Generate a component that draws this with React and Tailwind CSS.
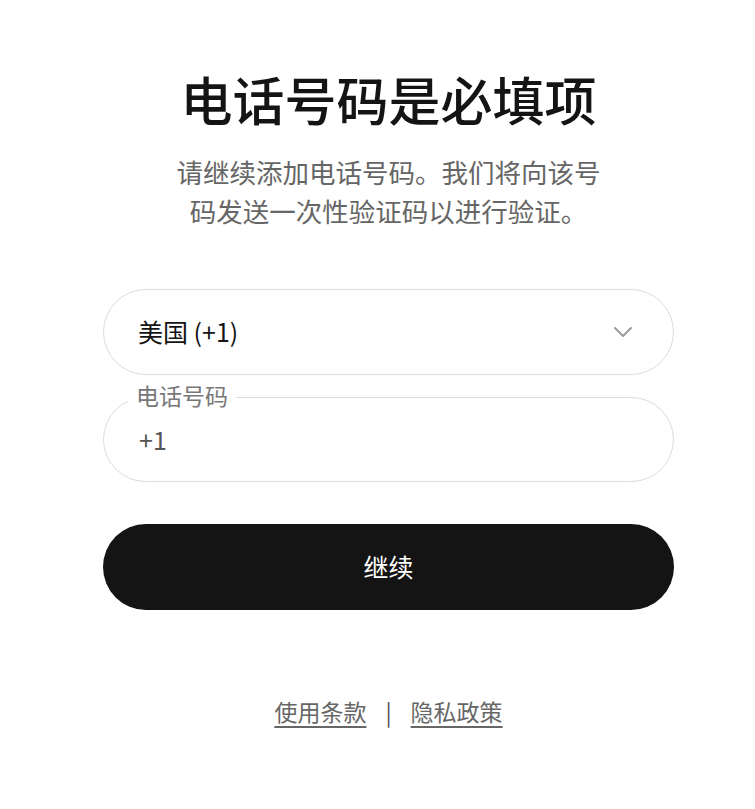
export default function App() {
  return (
    <div
      className="min-h-[809px] w-full bg-white pl-[103px] pr-[81px]"
      style={{ fontFamily: '"Noto Sans CJK SC", "Noto Sans", sans-serif' }}
    >
      <div className="flex w-[571px] flex-col items-center pt-[68px]">
        {/* Heading */}
        <h1 className="text-[52px] font-medium leading-[62px] text-[#141414]">电话号码是必填项</h1>
        <p className="mt-[22px] text-center text-[26.5px] leading-[39px] text-[#666666]">
          请继续添加电话号码。我们将向该号
          <br />
          码发送一次性验证码以进行验证。
        </p>

        {/* Country select */}
        <div className="mt-[59px] flex h-[86px] w-full items-center justify-between rounded-full border border-[#dcdcdc] pl-[34px] pr-[40px]">
          <span className="text-[25px] text-[#141414]">美国 (+1)</span>
          <svg width="20" height="12" viewBox="0 0 20 12" fill="none">
            <path d="M2 2l8 8 8-8" stroke="#9a9a9a" strokeWidth="2" strokeLinecap="round" strokeLinejoin="round" />
          </svg>
        </div>

        {/* Phone number field */}
        <div className="relative mt-[22px] flex h-[85px] w-full items-center rounded-full border border-[#dcdcdc] pl-[35px]">
          <span className="absolute -top-[18px] left-[24px] bg-white px-[8px] text-[23px] leading-[30px] text-[#777777]">
            电话号码
          </span>
          <span className="text-[25px] text-[#555555]">+1</span>
        </div>

        {/* Continue button */}
        <button className="mt-[42px] flex h-[86px] w-full items-center justify-center rounded-full bg-[#141414] text-[25px] text-white">
          继续
        </button>

        {/* Footer links */}
        <div className="mt-[86px] flex items-center gap-[19px] text-[23px] leading-[30px] text-[#666666]">
          <a className="underline underline-offset-[5px]">使用条款</a>
          <span className="text-[#555555]">|</span>
          <a className="underline underline-offset-[5px]">隐私政策</a>
        </div>
      </div>
    </div>
  );
}
